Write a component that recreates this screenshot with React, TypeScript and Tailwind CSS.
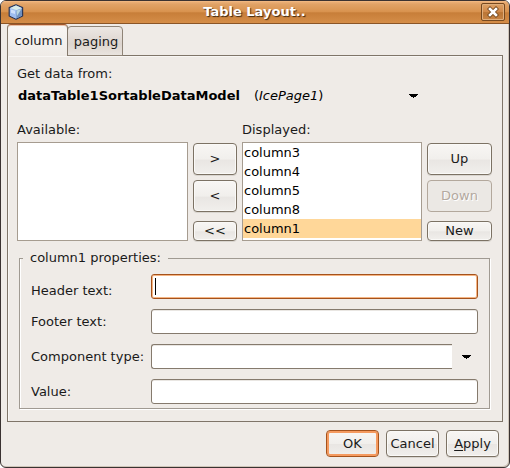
import { useState } from "react";
import type { ButtonHTMLAttributes, InputHTMLAttributes } from "react";

const raised =
  "rounded-[4px] border border-[#7c7264] bg-[linear-gradient(#f8f6f4,#f1efec_50%,#e9e6e3_54%,#f1efec)] text-[#1a1a1a] shadow-[inset_0_0_0_1px_#faf9f7,0_1px_0_#d9d5cf] disabled:border-[#b3a89c] disabled:bg-none disabled:bg-[#ebe8e4] disabled:text-[#b3a99f] disabled:shadow-none disabled:[text-shadow:1px_1px_0_#ffffff]";

function Button({ className = "", ...rest }: ButtonHTMLAttributes<HTMLButtonElement>) {
  return <button type="button" className={`${raised} flex items-center justify-center leading-4 ${className}`} {...rest} />;
}

function TextBox({ className = "", ...rest }: InputHTMLAttributes<HTMLInputElement>) {
  return (
    <input
      type="text"
      className={`h-[25px] w-full min-w-0 rounded-[3px] border bg-white px-1 outline-none ${className}`}
      {...rest}
    />
  );
}

const plainBox = "border-[#857a6d] shadow-[inset_0_1px_0_#e9e6e2]";

function Arrow() {
  return (
    <svg width="9" height="4" viewBox="0 0 9 4" className="shrink-0" shapeRendering="crispEdges" aria-hidden="true">
      <path d="M0 0h9v1H0zM1 1h7v1H1zM2 2h5v1H2zM4 3h1v1H4z" fill="#000" />
    </svg>
  );
}

function CubeIcon() {
  return (
    <svg width="16" height="16" viewBox="0 0 16 16" aria-hidden="true">
      <path d="M8 .8 14.6 3.6V12L8 15.3 1.2 12V3.6Z" fill="#a9c6ee" stroke="#2a3658" strokeWidth="1.2" strokeLinejoin="round" />
      <path d="M8 1.6 13.6 3.9 8.4 6 2.4 3.9Z" fill="#d9ece9" />
      <path d="M2 4.4 8 6.5V14.5L2 11.6Z" fill="#9dbcf0" />
      <path d="M3 5.4 7 6.8V10L3 8.8Z" fill="#cfe0fb" />
      <path d="M8.4 6.5 14 4.4V11.6L8.4 14.5Z" fill="#6f90bf" />
      <path d="M8.6 6.6 13.4 4.9 9 12Z" fill="#b8d5df" />
    </svg>
  );
}

function CloseIcon() {
  return (
    <svg width="12" height="12" viewBox="0 0 12 12" aria-hidden="true">
      <path d="M3 3 9 9M9 3 3 9" stroke="#70451d" strokeWidth="4.2" strokeLinecap="square" />
      <path d="M3 3 9 9M9 3 3 9" stroke="#fff" strokeWidth="2.6" strokeLinecap="square" />
    </svg>
  );
}

const columns = ["column3", "column4", "column5", "column8", "column1"];
const listBox =
  "h-[99px] w-full appearance-none overflow-hidden rounded-none border border-[#a69c90] bg-white p-0 outline-none";

export default function App() {
  const [selected, setSelected] = useState("column1");

  return (
    <div className="bg-white font-['DejaVu_Sans',sans-serif] text-[13px] leading-4 text-[#1a1a1a]">
      <main className="overflow-hidden rounded-[6px] border border-[#3a3231] bg-[#efebe7] shadow-[inset_-1px_-1px_0_#cfc5b9]">
        <header className="flex h-[23px] items-center border-b border-[#8a5527] bg-[linear-gradient(#f0b47c,#e0a266_15%,#d9934f_48%,#c77e39_54%,#d58d48)] pr-1 pl-[7px] shadow-[inset_0_1px_0_#f0b780]">
          <CubeIcon />
          <h1 className="flex-1 pl-1 text-center font-bold text-white [text-shadow:1px_1px_1px_#3d2612]">Table Layout..</h1>
          <button
            type="button"
            aria-label="Close"
            className="flex h-[18px] w-6 items-center justify-center rounded-[2px] border border-[#77491f] bg-[linear-gradient(#dda266,#d1894a_48%,#b97535_54%,#c98545)] shadow-[inset_0_0_0_1px_#dfae7c]"
          >
            <CloseIcon />
          </button>
        </header>

        <div className="px-[6px] pb-[10px]">
          <div role="tablist" className="-mb-px flex items-end">
            <button
              type="button"
              role="tab"
              aria-selected="true"
              className="relative h-8 w-[61px] rounded-t-[4px] border border-b-0 border-[#857a6d] border-t-[#a3562b] bg-[linear-gradient(#f9f7f5,#efebe7)] pl-[2px] text-center shadow-[inset_0_1px_0_#e9c3a8]"
            >
              column
            </button>
            <button
              type="button"
              role="tab"
              aria-selected="false"
              className="-ml-px h-[30px] w-14 rounded-t-[4px] border border-[#8f8477] bg-[linear-gradient(#ece7e3,#ddd5cf_60%,#e9e4df)] pt-[2px] pl-[2px] text-center"
            >
              paging
            </button>
          </div>

          <section role="tabpanel" className="border border-[#7f7569] pt-[10px] pr-[10px] pb-3 pl-[9px] shadow-[inset_1px_1px_0_#f8f6f4]">
            <label htmlFor="source" className="block">
              Get data from:
            </label>
            <div className="relative mt-[6px] flex w-[402px] max-w-full items-center justify-between px-px text-black">
              <span className="whitespace-nowrap">
                <b>dataTable1SortableDataModel</b>
                <span className="ml-[14px]">
                  (<i>IcePage1</i>)
                </span>
              </span>
              <Arrow />
              <select id="source" className="absolute inset-0 opacity-0">
                <option>dataTable1SortableDataModel (IcePage1)</option>
              </select>
            </div>

            <div className="mt-[18px] grid grid-cols-[171fr_44px_180fr_65px] gap-x-[5px] gap-y-1">
              <label htmlFor="available">Available:</label>
              <label htmlFor="displayed" className="col-start-3">
                Displayed:
              </label>
              <select id="available" size={5} className={`row-start-2 ${listBox}`} />
              <div className="row-start-2 flex flex-col py-px">
                <Button className="mb-[5px] h-8">&gt;</Button>
                <Button className="mb-[9px] h-8">&lt;</Button>
                <Button className="h-5">&lt;&lt;</Button>
              </div>
              <select
                id="displayed"
                size={5}
                value={selected}
                onChange={(e) => setSelected(e.target.value)}
                className={`row-start-2 ${listBox}`}
              >
                {columns.map((name) => (
                  <option
                    key={name}
                    className="h-[19px] min-h-0 px-px pt-[2px] pb-0 text-black checked:bg-[linear-gradient(#ffd799,#ffd799)] checked:text-black"
                  >
                    {name}
                  </option>
                ))}
              </select>
              <div className="row-start-2 flex flex-col py-px">
                <Button className="mb-[5px] h-8">Up</Button>
                <Button className="mb-[9px] h-8" disabled>
                  Down
                </Button>
                <Button className="h-5">New</Button>
              </div>
            </div>

            <fieldset className="mt-2 mr-[2px] ml-[2px] border border-[#a09a92] pr-[11px] pb-1 pl-[11px] shadow-[1px_1px_0_#ffffff,inset_1px_0_0_#ffffff]">
              <legend className="-ml-2 px-[7px]">column1 properties:</legend>
              <div className="grid grid-cols-[120px_1fr] items-center gap-y-[10px] pt-2">
                <label htmlFor="header" className="self-end">
                  Header text:
                </label>
                <div className="relative">
                  <TextBox
                    id="header"
                    className="block border-[#a5521c] caret-transparent shadow-[inset_0_0_0_1px_#f5b583]"
                  />
                  <span className="absolute top-1 left-1 h-[17px] w-px bg-black" />
                </div>
                <label htmlFor="footer">Footer text:</label>
                <TextBox id="footer" className={plainBox} />
                <label htmlFor="component">Component type:</label>
                <div className="flex items-center gap-[10px] pr-[7px]">
                  <select
                    id="component"
                    className={`h-[25px] min-w-0 flex-1 appearance-none rounded-l-[3px] border border-r-0 bg-white px-1 outline-none ${plainBox}`}
                  >
                    <option />
                  </select>
                  <Arrow />
                </div>
                <label htmlFor="value">Value:</label>
                <TextBox id="value" className={plainBox} />
              </div>
            </fieldset>
          </section>

          <footer className="mt-2 flex justify-end gap-[7px] pr-1">
            <Button className="h-[27px] w-[53px] border-[#a5521c] bg-[linear-gradient(#f8f6f4,#ebe8e5)] shadow-[inset_0_0_0_2px_#f59a5f]">
              OK
            </Button>
            <Button className="h-[27px] w-[53px]">Cancel</Button>
            <Button className="h-[27px] w-[53px]">
              <span>
                <span className="underline underline-offset-2">A</span>pply
              </span>
            </Button>
          </footer>
        </div>
      </main>
    </div>
  );
}
